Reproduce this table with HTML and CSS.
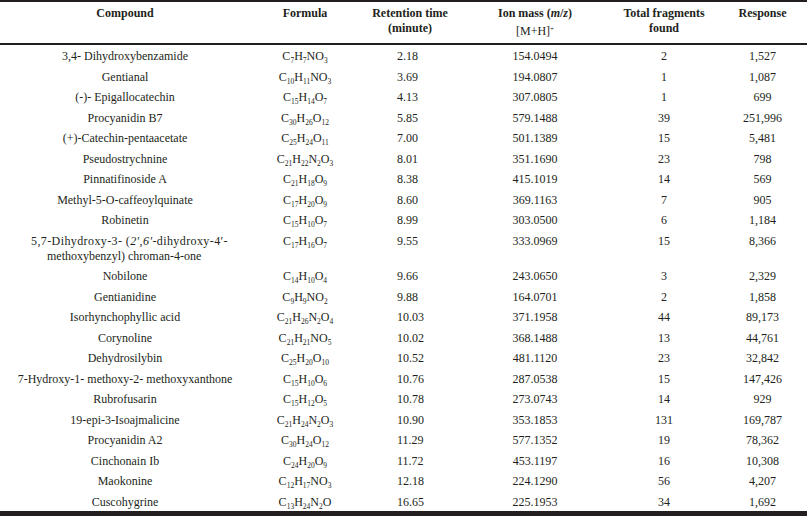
FILE: index.html
```html
<!DOCTYPE html>
<html>
<head>
<meta charset="utf-8">
<link rel="stylesheet" href="styles.css">
</head>
<body>
<table class="data">
  <colgroup>
    <col class="c-compound">
    <col class="c-formula">
    <col class="c-rt">
    <col class="c-ion">
    <col class="c-frag">
    <col class="c-resp">
  </colgroup>
  <thead>
    <tr>
      <th>Compound</th>
      <th>Formula</th>
      <th>Retention time<br>(minute)</th>
      <th>Ion mass (<i>m</i>/<i>z</i>)<span class="mh">[M+H]<sup>+</sup></span></th>
      <th>Total fragments<br>found</th>
      <th>Response</th>
    </tr>
  </thead>
  <tbody>
    <tr><td>3,4- Dihydroxybenzamide</td><td>C<sub>7</sub>H<sub>7</sub>NO<sub>3</sub></td><td class="rt">2.18</td><td>154.0494</td><td>2</td><td>1,527</td></tr>
    <tr><td>Gentianal</td><td>C<sub>10</sub>H<sub>11</sub>NO<sub>3</sub></td><td class="rt">3.69</td><td>194.0807</td><td>1</td><td>1,087</td></tr>
    <tr><td>(-)- Epigallocatechin</td><td>C<sub>15</sub>H<sub>14</sub>O<sub>7</sub></td><td class="rt">4.13</td><td>307.0805</td><td>1</td><td>699</td></tr>
    <tr><td>Procyanidin B7</td><td>C<sub>30</sub>H<sub>26</sub>O<sub>12</sub></td><td class="rt">5.85</td><td>579.1488</td><td>39</td><td>251,996</td></tr>
    <tr><td>(+)-Catechin-pentaacetate</td><td>C<sub>25</sub>H<sub>24</sub>O<sub>11</sub></td><td class="rt">7.00</td><td>501.1389</td><td>15</td><td>5,481</td></tr>
    <tr><td>Pseudostrychnine</td><td>C<sub>21</sub>H<sub>22</sub>N<sub>2</sub>O<sub>3</sub></td><td class="rt">8.01</td><td>351.1690</td><td>23</td><td>798</td></tr>
    <tr><td>Pinnatifinoside A</td><td>C<sub>21</sub>H<sub>18</sub>O<sub>9</sub></td><td class="rt">8.38</td><td>415.1019</td><td>14</td><td>569</td></tr>
    <tr><td>Methyl-5-O-caffeoylquinate</td><td>C<sub>17</sub>H<sub>20</sub>O<sub>9</sub></td><td class="rt">8.60</td><td>369.1163</td><td>7</td><td>905</td></tr>
    <tr><td>Robinetin</td><td>C<sub>15</sub>H<sub>10</sub>O<sub>7</sub></td><td class="rt">8.99</td><td>303.0500</td><td>6</td><td>1,184</td></tr>
    <tr><td class="long"><span class="l1">5,7-Dihydroxy-3- (<i>2′,6′</i>-dihydroxy-4′-</span><span class="l2">methoxybenzyl) chroman-4-one</span></td><td>C<sub>17</sub>H<sub>16</sub>O<sub>7</sub></td><td class="rt">9.55</td><td>333.0969</td><td>15</td><td>8,366</td></tr>
    <tr><td>Nobilone</td><td>C<sub>14</sub>H<sub>10</sub>O<sub>4</sub></td><td class="rt">9.66</td><td>243.0650</td><td>3</td><td>2,329</td></tr>
    <tr><td>Gentianidine</td><td>C<sub>9</sub>H<sub>9</sub>NO<sub>2</sub></td><td class="rt">9.88</td><td>164.0701</td><td>2</td><td>1,858</td></tr>
    <tr><td>Isorhynchophyllic acid</td><td>C<sub>21</sub>H<sub>26</sub>N<sub>2</sub>O<sub>4</sub></td><td class="rt">10.03</td><td>371.1958</td><td>44</td><td>89,173</td></tr>
    <tr><td>Corynoline</td><td>C<sub>21</sub>H<sub>21</sub>NO<sub>5</sub></td><td class="rt">10.02</td><td>368.1488</td><td>13</td><td>44,761</td></tr>
    <tr><td>Dehydrosilybin</td><td>C<sub>25</sub>H<sub>20</sub>O<sub>10</sub></td><td class="rt">10.52</td><td>481.1120</td><td>23</td><td>32,842</td></tr>
    <tr><td>7-Hydroxy-1- methoxy-2- methoxyxanthone</td><td>C<sub>15</sub>H<sub>10</sub>O<sub>6</sub></td><td class="rt">10.76</td><td>287.0538</td><td>15</td><td>147,426</td></tr>
    <tr><td>Rubrofusarin</td><td>C<sub>15</sub>H<sub>12</sub>O<sub>5</sub></td><td class="rt">10.78</td><td>273.0743</td><td>14</td><td>929</td></tr>
    <tr><td>19-epi-3-Isoajmalicine</td><td>C<sub>21</sub>H<sub>24</sub>N<sub>2</sub>O<sub>3</sub></td><td class="rt">10.90</td><td>353.1853</td><td>131</td><td>169,787</td></tr>
    <tr><td>Procyanidin A2</td><td>C<sub>30</sub>H<sub>24</sub>O<sub>12</sub></td><td class="rt">11.29</td><td>577.1352</td><td>19</td><td>78,362</td></tr>
    <tr><td>Cinchonain Ib</td><td>C<sub>24</sub>H<sub>20</sub>O<sub>9</sub></td><td class="rt">11.72</td><td>453.1197</td><td>16</td><td>10,308</td></tr>
    <tr><td>Maokonine</td><td>C<sub>12</sub>H<sub>17</sub>NO<sub>3</sub></td><td class="rt">12.18</td><td>224.1290</td><td>56</td><td>4,207</td></tr>
    <tr><td>Cuscohygrine</td><td>C<sub>13</sub>H<sub>24</sub>N<sub>2</sub>O</td><td class="rt">16.65</td><td>225.1953</td><td>34</td><td>1,692</td></tr>
  </tbody>
</table>
</body>
</html>
```

FILE: styles.css
```css
html, body {
  margin: 0;
  padding: 0;
  background: #ffffff;
}

body {
  font-family: "Liberation Serif", "Times New Roman", serif;
  font-size: 12px;
  color: #231f20;
  width: 807px;
}

.data {
  width: 807px;
  table-layout: fixed;
  border-collapse: separate;
  border-spacing: 0;
  border-top: 2px solid #231f20;
  border-bottom: 5px solid #231f20;
}

.c-compound { width: 250px; }
.c-formula { width: 110px; }
.c-rt { width: 100px; }
.c-ion { width: 150px; }
.c-frag { width: 108px; }
.c-resp { width: 89px; }

.data th {
  font-weight: bold;
  line-height: 15px;
  height: 43px;
  box-sizing: border-box;
  padding: 4px 0 0;
  vertical-align: top;
  text-align: center;
  border-bottom: 2px solid #231f20;
}

.data th .mh {
  display: block;
  font-weight: normal;
  margin-top: 3px;
}

.data th sup {
  font-size: 7px;
  vertical-align: 4px;
  line-height: 0;
}

.data td {
  line-height: 15px;
  padding: 4px 0 1.5px;
  vertical-align: top;
  text-align: center;
  white-space: nowrap;
}

.data td.rt {
  text-align: left;
  padding-left: 37px;
}

.data td.long {
  text-align: left;
  overflow: visible;
}

.long .l1 {
  display: block;
  padding-left: 31px;
  letter-spacing: 0.4px;
}

.long .l2 {
  display: block;
  padding-left: 47px;
}

.data sub {
  font-size: 7.5px;
  vertical-align: -3px;
  line-height: 0;
}
```
